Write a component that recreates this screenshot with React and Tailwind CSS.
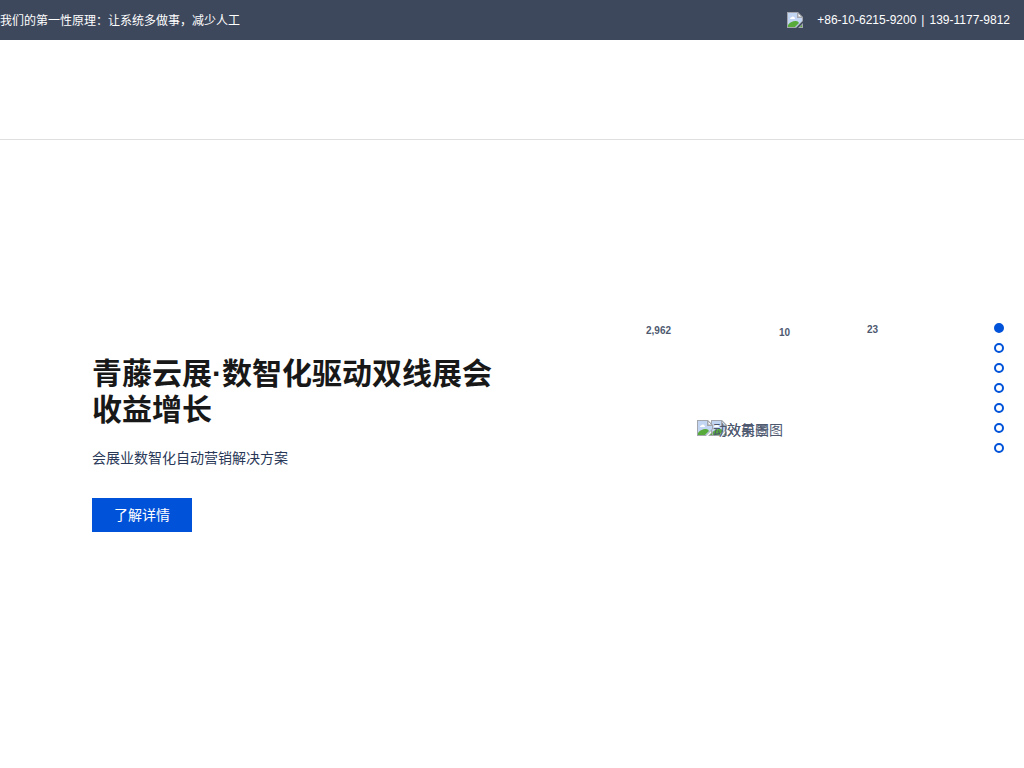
import React from 'react';

const stats = [
    { value: '2,962', place: 'left-[134px] top-[185px]' },
    { value: '10', place: 'left-[267px] top-[187px]' },
    { value: '23', place: 'left-[355px] top-[184px]' },
];

const slides = [1, 2, 3, 4, 5, 6, 7];

function BrokenImage() {
    return (
        <svg className="h-4 w-4 shrink-0" viewBox="0 0 16 16" aria-hidden="true">
            <path d="M0 0h11l5 5v4l-7 7H0z" fill="#a3a7ad" />
            <path d="M1 1h9v5h5v3l-6 6H1z" fill="#c2d5f3" />
            <path d="M3 7c0-1 1-2 2-2 1-1 3 0 3 2z" fill="#fff" />
            <path d="M1 15v-2c2-3 5-4 7-4 1 0 3 0 4 2l-4 4z" fill="#58ab3b" />
            <path d="M11 1v4h4z" fill="#fff" stroke="#a3a7ad" strokeWidth="1" />
            <path d="M16 11v5h-5z" fill="#a3a7ad" />
            <path d="M15 13v2h-2z" fill="#58ab3b" />
        </svg>
    );
}

function TopBar() {
    return (
        <div className="flex h-10 items-center justify-between bg-[#3e485d] pr-3.5 text-xs text-white">
            <p className="pt-px">我们的第一性原理：让系统多做事，减少人工</p>
            <div className="flex items-center gap-3.5">
                <BrokenImage />
                <p className="flex gap-[5px]">
                    <span>+86-10-6215-9200</span>
                    <span>|</span>
                    <span>139-1177-9812</span>
                </p>
            </div>
        </div>
    );
}

export default function App() {
    return (
        <div className="flex min-h-screen flex-col bg-white font-['Liberation_Sans','Noto_Sans_CJK_SC',sans-serif] text-sm text-[#4e5970]">
            <TopBar />
            <header className="h-[100px] border-b border-[#dfdfdf]" />
            <main className="relative grid grow grid-cols-2">
                <section className="pt-[216px] pl-[92px]">
                    <h1 className="text-[30px] leading-9 font-bold text-[#181818]">青藤云展·数智化驱动双线展会收益增长</h1>
                    <p className="mt-5 leading-5 text-[#2a3858]">会展业数智化自动营销解决方案</p>
                    <button type="button" className="mt-[30px] h-[34px] w-[100px] bg-[#0052d9] text-white">了解详情</button>
                </section>
                <section className="relative">
                    {stats.map((stat) => (
                        <span key={stat.value} className={`absolute text-[10px] leading-3 font-bold ${stat.place}`}>{stat.value}</span>
                    ))}
                    <div className="absolute top-[280px] left-[199px] flex leading-5">
                        <BrokenImage />
                        <span>效果图</span>
                    </div>
                    <div className="absolute top-[280px] left-[185px] flex leading-5">
                        <BrokenImage />
                        <span>动效前景图</span>
                    </div>
                </section>
                <nav className="absolute top-[183px] right-5 flex flex-col gap-2.5">
                    {slides.map((slide) => (
                        <button
                            key={slide}
                            type="button"
                            aria-label={`${slide}`}
                            className={`h-2.5 w-2.5 rounded-full border-2 border-[#0052d9] ${slide === 1 ? 'bg-[#0052d9]' : 'bg-white'}`}
                        />
                    ))}
                </nav>
            </main>
        </div>
    );
}
